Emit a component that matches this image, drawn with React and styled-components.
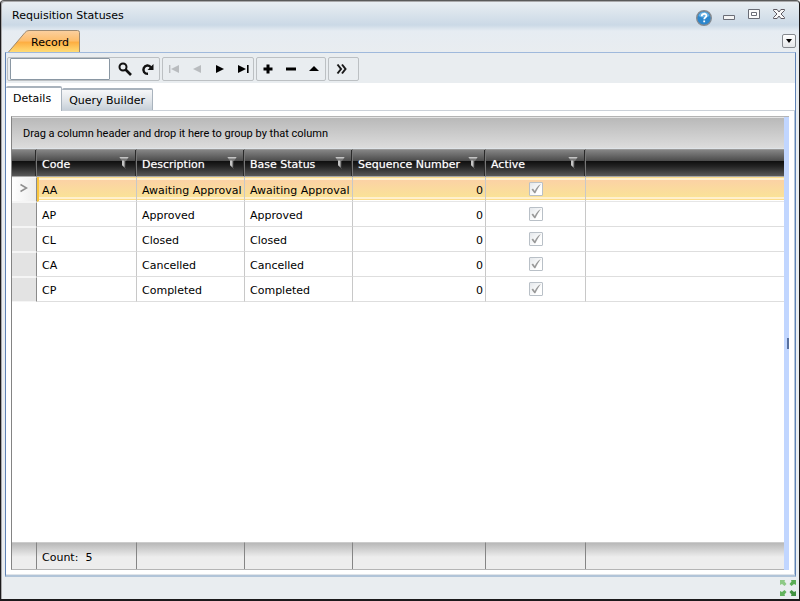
import { useState } from 'react'
import styled, { createGlobalStyle, css } from 'styled-components'

const GlobalStyle = createGlobalStyle`
    *, *::before, *::after {
        box-sizing: border-box;
    }

    body {
        margin: 0;
        background: #fff;
        color: #000;
        font: 11px/16px Verdana, "DejaVu Sans", sans-serif;
    }

    button, input {
        font: inherit;
        color: inherit;
    }
`

// ======================= WINDOW =======================
const Window = styled.main`
    display: flex;
    flex-direction: column;
    min-height: 100vh;
    padding: 0 3px 0 4px;
    border: solid #1b1a1c;
    border-width: 1px 1px 2px 1px;
    border-top-color: #5a5a5a;
    border-radius: 4px 4px 0 0;
    background: linear-gradient(#eaeff3, #cbd9e6 24px, #e6ecf2 30px, #e9edf0 52px);
    box-shadow: inset 1px 1px 0 #a9a9ab;
`

const TitleBar = styled.header`
    display: flex;
    align-items: center;
    justify-content: space-between;
    height: 29px;
    padding: 0 9px 0 7px;
`

const Title = styled.h1`
    margin: 0;
    font-size: 11px;
    font-weight: normal;
`

const WindowButtons = styled.div`
    display: flex;
    gap: 9px;
`

const PlainButton = styled.button`
    display: flex;
    align-items: center;
    justify-content: center;
    width: 16px;
    height: 20px;
    padding: 0;
    border: 0;
    background: none;
    cursor: pointer;

    &:disabled {
        cursor: default;
    }
`

const RecordBar = styled.nav`
    display: flex;
    align-items: flex-end;
    justify-content: space-between;
    height: 22px;
    padding-left: 3px;
`

const RecordTab = styled.button`
    position: relative;
    width: 72px;
    height: 22px;
    padding: 4px 0 0 12px;
    border: 0;
    background: none;
    cursor: pointer;

    & svg {
        position: absolute;
        inset: 0;
        z-index: 0;
    }

    & span {
        position: relative;
    }
`

const ListButton = styled.button`
    display: flex;
    align-items: center;
    justify-content: center;
    align-self: center;
    width: 14px;
    height: 14px;
    padding: 0;
    border: 1px solid #85898e;
    border-radius: 2px;
    background: linear-gradient(#fff, #e4e6e8);
`

const Frame = styled.section`
    display: flex;
    flex: 1;
    flex-direction: column;
    border: 1px solid #5e82b5;
    border-top-color: #9fb9dc;
    border-bottom: 2px solid #b1c4d8;
    background: #fff;
`

// ======================= TOOLBAR =======================
const Toolbar = styled.div`
    display: flex;
    gap: 2px;
    height: 30px;
    padding: 4px 1px 2px;
    background: #e9edf0;
`

const ToolGroup = styled.div`
    display: flex;
    align-items: center;
    gap: 7px;
    height: 24px;
    padding: ${({ $pad }) => $pad || '0 3px'};
    border: 1px solid #bcc0c3;
    border-radius: 2px;
`

const SearchBox = styled.input`
    width: 100px;
    height: 22px;
    padding: 0 4px;
    border: 1px solid #8a97a3;
    border-radius: 1px;
    background: #fff;
    outline: none;
`

// ======================= TABS =======================
const Tabs = styled.div`
    display: flex;
    align-items: flex-end;
    height: 28px;
    border-bottom: 1px solid #cbd1d8;
`

const Tab = styled.button`
    height: 22px;
    padding: 2px 7px 0;
    border: 1px solid #a9b3bd;
    border-top-width: 2px;
    border-bottom: 0;
    border-left: 0;
    border-radius: 2px 2px 0 0;
    background: linear-gradient(#f6f7f8, #dde2e7 60%, #c6cfd8);
    white-space: nowrap;
    cursor: pointer;

    ${({ $active }) => $active && css`
        height: 25px;
        margin-bottom: -1px;
        padding: 0 10px 2px 7px;
        background: #fff;
    `}
`

// ======================= GRID =======================
const GridArea = styled.div`
    display: flex;
    flex: 1;
    padding: 5px 5px 4px 5px;
    border-right: 1px solid #b5c5d7;
    border-bottom: 1px solid #dfe4e9;
`

const Grid = styled.div`
    display: flex;
    flex: 1;
    flex-direction: column;
    min-width: 0;
    border: solid #848484;
    border-width: 1px 0 1px 1px;
    border-top-color: #b4b4b4;
    border-bottom-color: #b4b4b4;
`

const GroupPanel = styled.div`
    padding: 9px 11px 7px;
    border-top: 1px solid #e4e4e4;
    border-bottom: 1px solid #dfe4e8;
    background: linear-gradient(#b9b9b9, #dcdcdc);
    font-family: Roboto, sans-serif;
    line-height: 14px;
`

const Table = styled.table`
    width: 100%;
    table-layout: fixed;
    border-spacing: 0;
`

const HeaderCell = styled.th`
    height: 28px;
    padding: 4px 6px 0 5px;
    border-right: 1px solid #777;
    border-bottom: 1px solid #a8a8a8;
    background: linear-gradient(#8a8a8a 0, #4b4b4b 12px, #0e0e0e 12px, #222 17px, #595959);
    box-shadow: inset 0 1px 0 #999, inset -1px 0 0 #2a2a2a;
    color: #fff;
    font-weight: normal;
    text-align: left;
    white-space: nowrap;

    &:last-child {
        border-right: 0;
        box-shadow: inset 0 1px 0 #999;
    }
`

const HeaderContent = styled.div`
    display: flex;
    align-items: center;
    justify-content: space-between;
    text-shadow: 0 0 1px #aaa;

    & svg {
        margin-bottom: 4px;
    }
`

const Cell = styled.td`
    height: 25px;
    padding: ${({ $align }) => $align === 'center' ? '0' : '4px 2px 0 5px'};
    border-right: 1px solid #c8c8c8;
    border-bottom: 1px solid #dedede;
    text-align: ${({ $align }) => $align || 'left'};
    white-space: nowrap;

    &:last-child {
        border-right: 0;
    }
`

const RowHeader = styled.th`
    padding: 0;
    border: solid #f5f5f5;
    border-width: 1px 1px 1px 0;
    border-right-color: #8a8a8a;
    background: #e3e3e3;
`

const Row = styled.tr`
    ${({ $selected }) => $selected && css`
        & ${Cell} {
            border-bottom-color: #e6e6e6;
            background: linear-gradient(#fbdc8a 1px, #fff0cd 1px 3px, #fbd2a5 3px, #fae297 20px, #fff0cd 20px 22px, #fbdc8a 22px 23px, #fff 23px);
        }

        & ${RowHeader} {
            background: linear-gradient(90deg, #fff, #ececec);
        }

        & ${RowHeader} + ${Cell} {
            border-left: 2px solid #f9c53e;
            padding-left: 3px;
        }
    `}
`

const Check = styled.input`
    display: block;
    appearance: none;
    width: 14px;
    height: 14px;
    margin: 0 auto;
    border: 1px solid #b9c0c7;
    border-radius: 1px;
    background: linear-gradient(135deg, #e5e8eb, #fff 70%);

    &:checked {
        background: url("data:image/svg+xml,%3Csvg xmlns='http://www.w3.org/2000/svg' viewBox='0 0 12 12'%3E%3Cpath d='M1.500 6.500 3 5.600 4.800 8 C6.200 5 8 2.500 10.800 1 8.600 3.800 7 7 5.400 10.300H4.300Z' fill='%23999'/%3E%3C/svg%3E") center / 12px 12px no-repeat, linear-gradient(135deg, #e5e8eb, #fff 70%);
    }
`

const Spacer = styled.div`
    flex: 1;
`

const FooterCell = styled.td`
    height: 27px;
    padding: 4px 5px 0;
    border-right: 1px solid #858585;
    border-top: 1px solid #ccc;
    background: linear-gradient(#b8b8b8, #ededed 14px);
    white-space: nowrap;

    &:last-child {
        border-right: 0;
    }
`

const Splitter = styled.div`
    display: flex;
    align-items: center;
    justify-content: flex-end;
    width: 5px;
    border-top: 1px solid #b4b4b4;
    background: #c1d6ff;

    &::after {
        content: '';
        width: 2px;
        height: 11px;
        background: #5871a0;
    }
`

const StatusBar = styled.footer`
    display: flex;
    align-items: center;
    justify-content: flex-end;
    height: 22px;
    background: #e9edf0;
`
// ======================= STYLES =======================

const GLYPHS = {
  search: <><circle cx='6' cy='6' r='3.5' fill='none' stroke='#111' strokeWidth='2' /><path d='M8.5 8.5 14 14' stroke='#111' strokeWidth='2.6' /></>,
  refresh: <><path d='M8 12.8C4.500 13 2.500 10 3.800 7 5.200 4 9 3.500 11 6.500' fill='none' stroke='#111' strokeWidth='2.500' /><path d='M13.500 3v6H7.500Z' fill='#111' /></>,
  first: <path d='M3 4h1.4v8H3zM13 4v8L5 8z' />,
  prev: <path d='M12 4v8L4 8z' />,
  next: <path d='M4 4v8l8-4z' />,
  last: <path d='M3 4v8l8-4zM12 4h1.6v8H12z' />,
  add: <path d='M6.5 3.5h3v3h3v3h-3v3h-3v-3h-3v-3h3z' />,
  remove: <path d='M3 6.5h10v3H3z' />,
  up: <path d='M3 10h10L8 5z' />,
  more: <path d='M3.5 3.5 7 8l-3.5 4.5M8 3.5 11.5 8 8 12.5' fill='none' stroke='#1a1a1a' strokeWidth='2' />
}

const ToolButton = ({ icon, label, disabled }) => (
  <PlainButton type='button' aria-label={label} disabled={disabled}>
    <svg width='16' height='16' viewBox='0 0 16 16' fill={disabled ? '#b9bcbf' : '#000'} aria-hidden='true'>
      {GLYPHS[icon]}
    </svg>
  </PlainButton>
)

const FilterIcon = () => (
  <svg width='12' height='12' viewBox='0 0 12 12' aria-hidden='true'>
    <path d='M1 0h10L8 4v8L4 8.500V4z' fill='#777' />
    <path d='M1.500 0h9l-1 1.500h-7zM4 3.500h2.200v6.500L4 8z' fill='#c4c4c4' />
    <path d='M7.500 4v7.500' stroke='#333' />
  </svg>
)

const COLUMNS = [
  { label: 'Code', width: 100 },
  { label: 'Description', width: 108 },
  { label: 'Base Status', width: 108 },
  { label: 'Sequence Number', width: 133 },
  { label: 'Active', width: 100 }
]

const STATUSES = [
  { code: 'AA', name: 'Awaiting Approval', sequence: 0, active: true },
  { code: 'AP', name: 'Approved', sequence: 0, active: true },
  { code: 'CL', name: 'Closed', sequence: 0, active: true },
  { code: 'CA', name: 'Cancelled', sequence: 0, active: true },
  { code: 'CP', name: 'Completed', sequence: 0, active: true }
]

const Columns = () => (
  <colgroup>
    <col width='25' />
    {COLUMNS.map(({ label, width }) => <col key={label} width={width} />)}
    <col />
  </colgroup>
)

const App = () => {
  const [tab, setTab] = useState('Details')
  const [selected, setSelected] = useState('AA')

  return (
    <>
      <GlobalStyle />
      <Window>
        <TitleBar>
          <Title>Requisition Statuses</Title>
          <WindowButtons>
            <PlainButton type='button' aria-label='Help'>
              <svg width='16' height='20' viewBox='0 0 16 20' overflow='visible' aria-hidden='true'>
                <circle cx='8' cy='12' r='7.3' fill='#2c86cc' stroke='#858b91' strokeWidth='1.4' />
                <path d='M2.5 10a5.6 5 0 0 1 11 0Q8 13 2.5 10' fill='#69b2e5' />
                <path d='M5.7 10.2c0-3.3 4.7-3 4.7-.5 0 1.7-2.2 1.6-2.2 3.6M8.2 14.6v1.7' fill='none' stroke='#fff' strokeWidth='1.8' />
              </svg>
            </PlainButton>
            <PlainButton type='button' aria-label='Minimize'>
              <svg width='16' height='20' viewBox='0 0 16 20' aria-hidden='true'>
                <path d='M2.5 9.5h11v4h-11z' fill='#f4f4f4' stroke='#6a6d76' />
              </svg>
            </PlainButton>
            <PlainButton type='button' aria-label='Restore'>
              <svg width='16' height='20' viewBox='0 0 16 20' aria-hidden='true'>
                <path d='M2.5 3.5h11v9h-11z' fill='#fafafa' stroke='#6a6d76' />
                <path d='M5.5 6.5h5v3h-5z' fill='#fff' stroke='#6a6d76' />
              </svg>
            </PlainButton>
            <PlainButton type='button' aria-label='Close'>
              <svg width='16' height='20' viewBox='0 0 16 20' aria-hidden='true'>
                <path d='M2.5 3.5h3.6L8 6l1.9-2.5h3.6v1L10 8l3.5 3.5v1H9.9L8 10l-1.9 2.5H2.5v-1L6 8 2.5 4.5Z' fill='#fafafa' stroke='#5f5a62' />
              </svg>
            </PlainButton>
          </WindowButtons>
        </TitleBar>

        <RecordBar>
          <RecordTab type='button'>
            <svg width='72' height='22' aria-hidden='true'>
              <defs>
                <linearGradient id='record' x2='0' y2='1'>
                  <stop offset='0' stopColor='#fbd0a0' />
                  <stop offset='.48' stopColor='#fdbd6b' />
                  <stop offset='.55' stopColor='#fdae42' />
                  <stop offset='1' stopColor='#ffdc76' />
                </linearGradient>
              </defs>
              <path d='M.5 22 17 2.5Q18.5 .5 21 .5H69.5Q71.5 .5 71.5 2.5V22' fill='url(#record)' stroke='#9d8a72' />
            </svg>
            <span>Record</span>
          </RecordTab>
          <ListButton type='button' aria-label='Open records'>
            <svg width='8' height='8' viewBox='0 0 8 8' aria-hidden='true'><path d='M1 2h6L4 6z' /></svg>
          </ListButton>
        </RecordBar>

        <Frame>
          <Toolbar>
            <ToolGroup $pad='0 3px 0 2px'>
              <SearchBox aria-label='Search records' />
              <ToolButton icon='search' label='Search' />
              <ToolButton icon='refresh' label='Refresh' />
            </ToolGroup>
            <ToolGroup $pad='0 2px 0 3px'>
              <ToolButton icon='first' label='First' disabled />
              <ToolButton icon='prev' label='Previous' disabled />
              <ToolButton icon='next' label='Next' />
              <ToolButton icon='last' label='Last' />
            </ToolGroup>
            <ToolGroup>
              <ToolButton icon='add' label='Add' />
              <ToolButton icon='remove' label='Remove' />
              <ToolButton icon='up' label='Move up' />
            </ToolGroup>
            <ToolGroup $pad='0 8px 0 5px'>
              <ToolButton icon='more' label='More' />
            </ToolGroup>
          </Toolbar>

          <Tabs role='tablist'>
            {['Details', 'Query Builder'].map(name => (
              <Tab key={name} type='button' role='tab' aria-selected={tab === name} $active={tab === name} onClick={() => setTab(name)}>
                {name}
              </Tab>
            ))}
          </Tabs>

          <GridArea>
            <Grid>
              <GroupPanel>Drag a column header and drop it here to group by that column</GroupPanel>
              <Table>
                <Columns />
                <thead>
                  <tr>
                    <HeaderCell />
                    {COLUMNS.map(({ label }) => (
                      <HeaderCell key={label} scope='col'>
                        <HeaderContent>{label}<FilterIcon /></HeaderContent>
                      </HeaderCell>
                    ))}
                    <HeaderCell />
                  </tr>
                </thead>
                <tbody>
                  {STATUSES.map(({ code, name, sequence, active }) => (
                    <Row key={code} $selected={selected === code} onClick={() => setSelected(code)}>
                      <RowHeader>
                        {selected === code && (
                          <svg width='8' height='10' viewBox='0 0 8 10' aria-hidden='true'>
                            <path d='M.5 1.5 6.5 5 .5 8.5' fill='none' stroke='#8e8e8e' strokeWidth='1.5' />
                          </svg>
                        )}
                      </RowHeader>
                      <Cell>{code}</Cell>
                      <Cell>{name}</Cell>
                      <Cell>{name}</Cell>
                      <Cell $align='right'>{sequence}</Cell>
                      <Cell $align='center'><Check type='checkbox' aria-label={`${name} active`} checked={active} disabled readOnly /></Cell>
                      <Cell />
                    </Row>
                  ))}
                </tbody>
              </Table>
              <Spacer />
              <Table>
                <Columns />
                <tbody>
                  <tr>
                    <FooterCell />
                    <FooterCell>Count:&nbsp; {STATUSES.length}</FooterCell>
                    {COLUMNS.slice(1).map(({ label }) => <FooterCell key={label} />)}
                    <FooterCell />
                  </tr>
                </tbody>
              </Table>
            </Grid>
            <Splitter />
          </GridArea>
        </Frame>

        <StatusBar>
          <PlainButton type='button' aria-label='Full screen'>
            <svg width='16' height='16' viewBox='0 0 16 16' aria-hidden='true'>
              <path d='M0 0h5L4.5 1.5l2 2.5-2 2-2.5-2L0 5z' fill='#8dc986' />
              <path d='M16 0h-5l.5 1.5-2 2.5 2 2 2.5-2L16 5z' fill='#5aac55' />
              <path d='M0 16h5l-.5-1.5 2-2.5-2-2-2.500 2L0 11z' fill='#62b35d' />
              <path d='M16 16h-5l.5-1.5-2-2.5 2-2 2.500 2L16 11z' fill='#3f9040' />
            </svg>
          </PlainButton>
        </StatusBar>
      </Window>
    </>
  )
}

export default App
